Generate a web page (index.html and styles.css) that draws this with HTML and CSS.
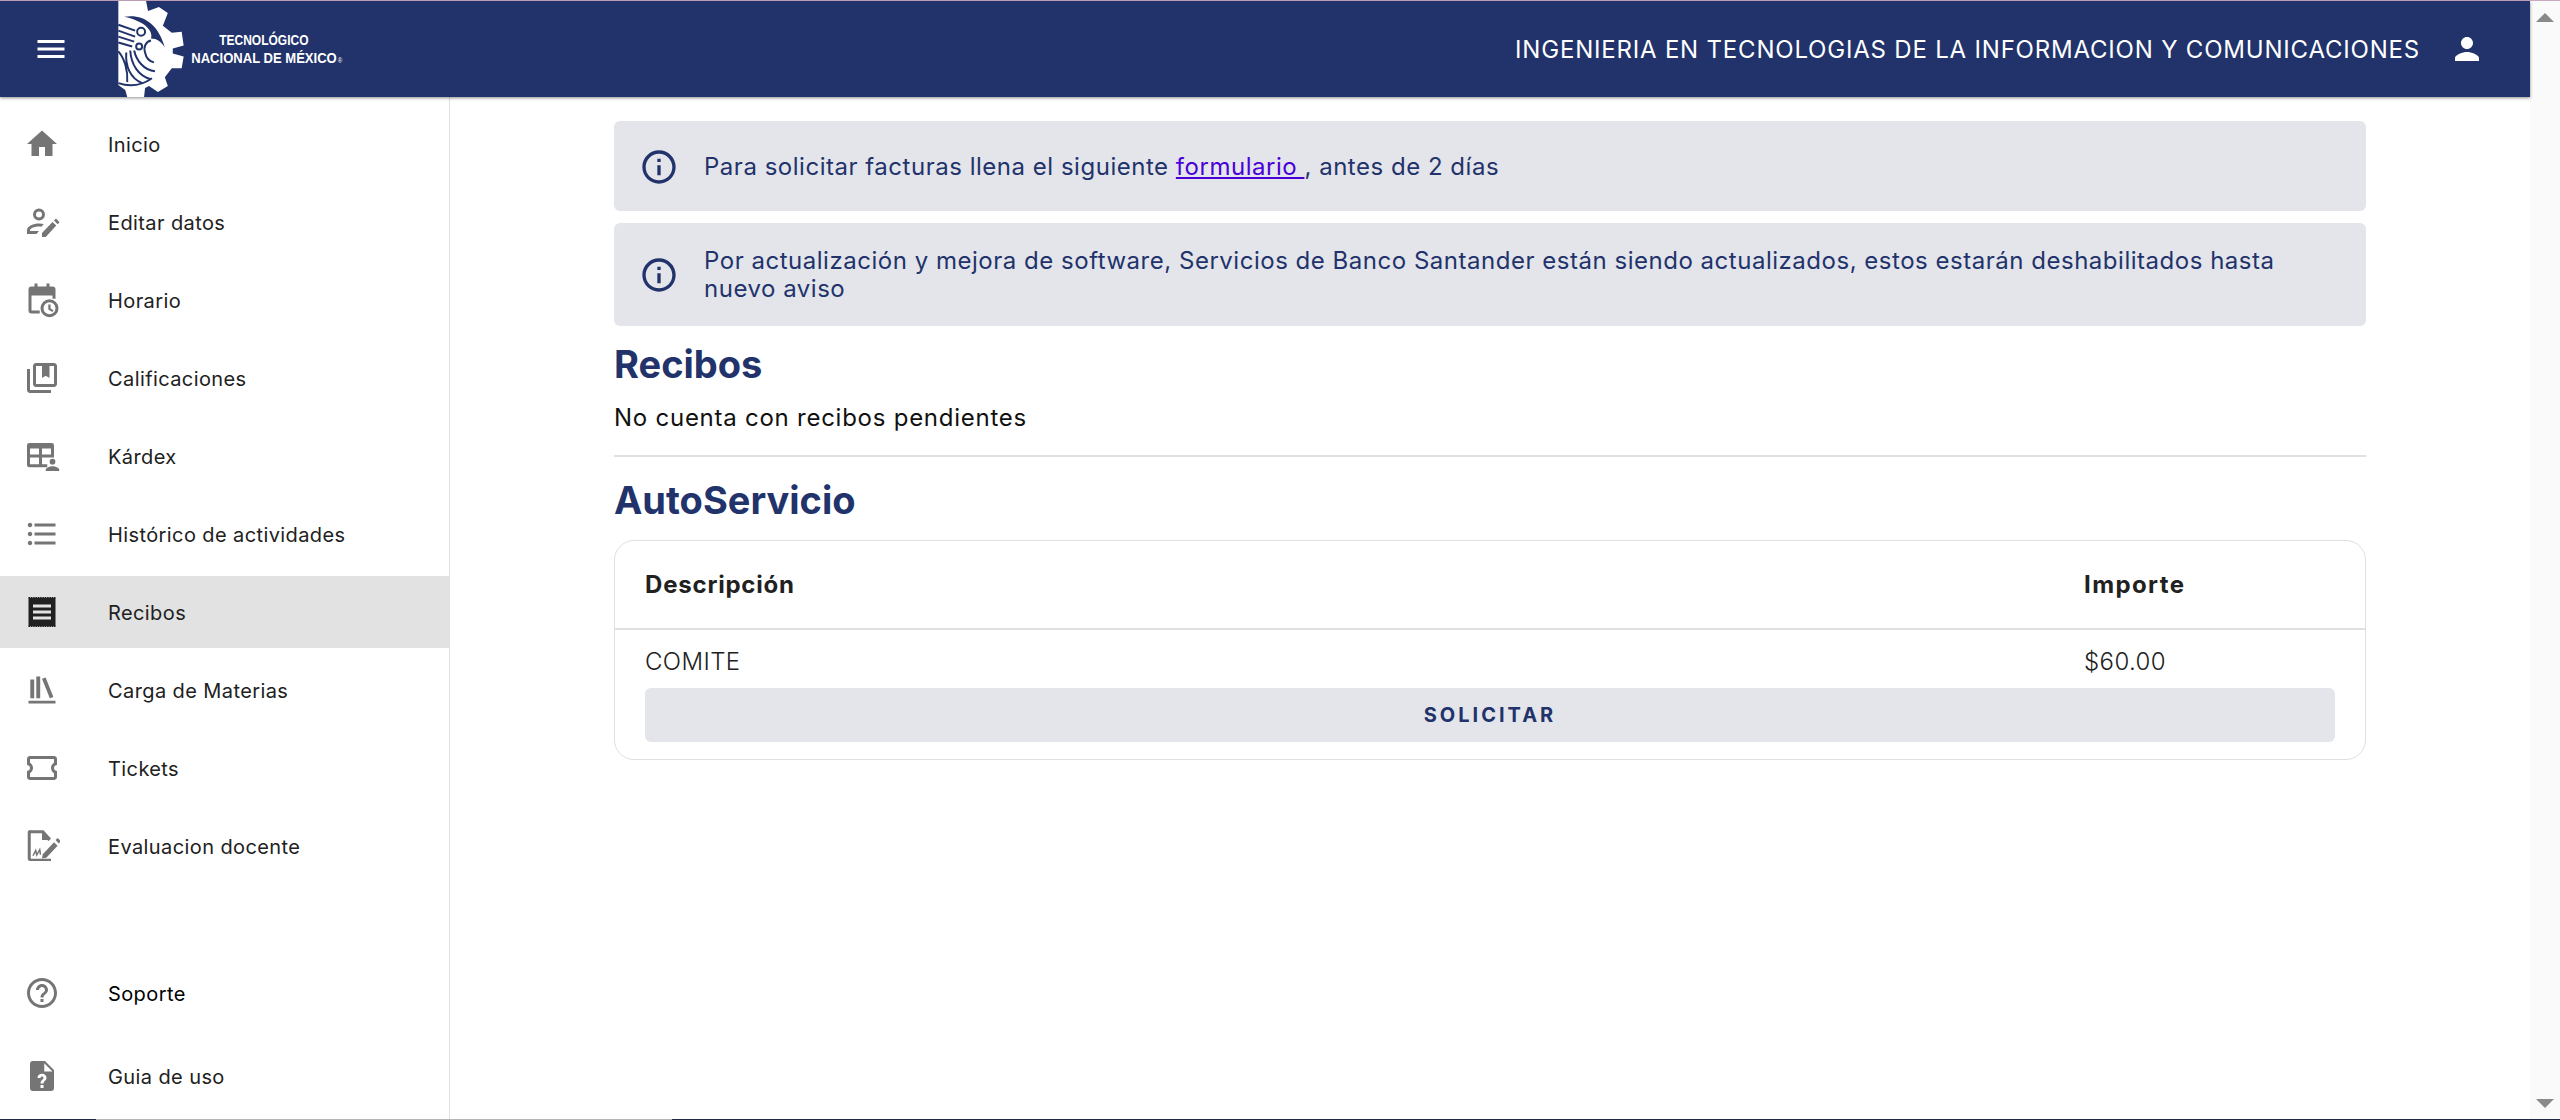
FILE: index.html
```html
<!DOCTYPE html>
<html lang="es">
<head>
  <meta charset="UTF-8" />
  <meta name="viewport" content="width=device-width, initial-scale=1.0"/>
  <title>Recibos | Tecnológico Nacional de México</title>
  <link rel="stylesheet" href="styles.css">
</head>
<body>

  <div class="top-line"></div>

  <div class="window">
    <div class="page">

      <header class="topbar">
        <div class="topbar-left">
          <button class="menu-btn" aria-label="Menu">
            <svg class="icon" viewBox="0 0 24 24"><path d="M3 18h18v-2H3v2zm0-5h18v-2H3v2zm0-7v2h18V6H3z"/></svg>
          </button>
          <div class="logo">
            <svg class="logo-gear" viewBox="117 0 68 97">
              <path class="gear" d="M118 0H146L148 10 159 6 168 12 163 25 172 32 182 31 184 45 173 48V53L184 56 182 68 172 68 165 77 168 86 158 92 149 86 145 88 144 97H127L125 90 118 85Z"/>
              <path class="eagle-fill" d="M124 16C142 13 158 22 165 47 161 41 157 38 151 38 153 32 148 26 141 22 135 19 130 17 124 16Z"/>
              <g class="eagle">
                <path d="M118 24 135 30M118 30 135 36M118 36 134 41M118 42 132 46"/>
                <path d="M151 40C146 41 143 46 145 52 146 57 149 61 154 62"/>
                <path d="M134 50C136 60 144 70 155 71M130 50C131 64 138 76 151 79M126 52C125 66 130 78 142 83M118 51C124 58 128 70 127 82"/>
                <path d="M118 83C130 87 142 85 152 78"/>
              </g>
              <circle class="eagle" cx="141" cy="31" r="4"/>
              <circle class="eagle" cx="139" cy="46" r="3"/>
            </svg>
            <div class="logo-text">
              <span class="logo-line-one">TECNOLÓGICO</span>
              <span class="logo-line-two">NACIONAL DE MÉXICO<small>®</small></span>
            </div>
          </div>
        </div>
        <div class="topbar-right">
          <span class="career">INGENIERIA EN TECNOLOGIAS DE LA INFORMACION Y COMUNICACIONES</span>
          <svg class="icon" viewBox="0 0 24 24"><path d="M12 12c2.21 0 4-1.79 4-4s-1.79-4-4-4-4 1.79-4 4 1.79 4 4 4zm0 2c-2.67 0-8 1.79-8 4v2h16v-2c0-2.21-5.33-4-8-4z"/></svg>
        </div>
      </header>

      <div class="body-row">
        <nav class="sidebar">
          <a class="nav-item">
            <svg class="icon" viewBox="0 0 24 24"><path d="M10 20v-6h4v6h5v-8h3L12 3 2 12h3v8z"/></svg>
            <span>Inicio</span>
          </a>
          <a class="nav-item">
            <svg class="icon" viewBox="0 0 24 24"><path fill-rule="evenodd" d="M10 3a4 4 0 1 1 0 8 4 4 0 0 1 0-8zm0 2a2 2 0 1 0 0 4 2 2 0 0 0 0-4zM2 20v-2.500C2 14.500 6.500 13 10 13c1.200 0 2.200.1 3.200.4l-1.600 1.800c-.5-.1-1-.2-1.600-.2-2.800 0-6 1.100-6 2.500v.5h6l-1.700 2H2z"/><path d="M12 22v-2.600l7-7.400 2.500 2.400-7 7.600zM20 11l1.300-1.300 2.400 2.400L22.400 13.500z"/></svg>
            <span>Editar datos</span>
          </a>
          <a class="nav-item">
            <svg class="icon" viewBox="0 0 24 24"><path fill-rule="evenodd" d="M7 1h2v2h6V1h2v2h2a2 2 0 0 1 2 2v6.200h-2V9H5v10h5.500v2H5a2 2 0 0 1-2-2V5a2 2 0 0 1 2-2h2z"/><path fill-rule="evenodd" d="M17 11.500a6 6 0 1 1 0 12 6 6 0 0 1 0-12zm0 2a4 4 0 1 0 0 8 4 4 0 0 0 0-8z"/><path d="M16.200 15h1.500v2.600l2 1.200-.8 1.200-2.700-1.700z"/></svg>
            <span>Horario</span>
          </a>
          <a class="nav-item">
            <svg class="icon" viewBox="0 0 24 24"><path d="M4 6H2v14c0 1.100.9 2 2 2h14v-2H4V6zm16-4H8c-1.100 0-2 .9-2 2v12c0 1.100.9 2 2 2h12c1.100 0 2-.9 2-2V4c0-1.100-.9-2-2-2zm0 14H8V4h4v8l2.500-1.500L17 12V4h3v12z"/></svg>
            <span>Calificaciones</span>
          </a>
          <a class="nav-item">
            <svg class="icon" viewBox="0 0 24 24"><path fill-rule="evenodd" d="M3.500 3.300h15A1.500 1.500 0 0 1 20 4.800V13h-8v4.500h3.500v2h-12A1.500 1.500 0 0 1 2 18V4.800a1.500 1.500 0 0 1 1.500-1.500zM4 7v4h6V7zm8 0v4h6V7zM4 13v4.500h6V13z"/><circle cx="19" cy="15.800" r="1.900"/><path d="M14.500 22v-.8c0-1.600 3-2.400 4.500-2.400s4.500.8 4.500 2.400v.8z"/></svg>
            <span>Kárdex</span>
          </a>
          <a class="nav-item">
            <svg class="icon" viewBox="0 0 24 24"><path d="M4 10.500c-.83 0-1.500.67-1.500 1.500s.67 1.500 1.500 1.500 1.500-.67 1.500-1.500-.67-1.500-1.500-1.500zm0-6c-.83 0-1.500.67-1.500 1.500S3.170 7.500 4 7.500 5.500 6.830 5.500 6 4.830 4.500 4 4.500zm0 12c-.83 0-1.500.68-1.500 1.500s.68 1.500 1.500 1.500 1.500-.68 1.500-1.500-.67-1.500-1.500-1.500zM7 19h14v-2H7v2zm0-6h14v-2H7v2zm0-8v2h14V5H7z"/></svg>
            <span>Histórico de actividades</span>
          </a>
          <a class="nav-item active">
            <svg class="icon" viewBox="0 0 24 24">
              <path fill-rule="evenodd" d="M3 2.500h18v19H3zM6 7v2h12V7zm0 4v2h12v-2zm0 4v2h12v-2z"/>
              <path class="teeth" d="M3 2.400H21M3 21.600H21"/>
            </svg>
            <span>Recibos</span>
          </a>
          <a class="nav-item">
            <svg class="icon" viewBox="0 0 24 24"><path d="M3 21h18v-1.800H3zM4.200 5h2.600v12.500H4.200zM8.200 3h2.600v14.500H8.200zM12 4.500l2.400-.8 5.200 13-2.400.8z"/></svg>
            <span>Carga de Materias</span>
          </a>
          <a class="nav-item">
            <svg class="icon" viewBox="0 0 24 24"><path d="M22 10V6c0-1.110-.9-2-2-2H4c-1.100 0-1.990.89-1.990 2v4c1.100 0 1.990.9 1.990 2s-.89 2-2 2v4c0 1.100.9 2 2 2h16c1.100 0 2-.9 2-2v-4c-1.100 0-2-.9-2-2s.9-2 2-2zm-2-1.460c-1.190.69-2 1.990-2 3.460s.81 2.770 2 3.460V18H4v-2.540c1.190-.69 2-1.990 2-3.460 0-1.480-.8-2.770-1.990-3.460L4 6h16v2.540z"/></svg>
            <span>Tickets</span>
          </a>
          <a class="nav-item">
            <svg class="icon" viewBox="0 0 24 24"><path d="M4.500 1.500H13l5 5.500-1.500 1.600-1-.6H12V3.500H4.500v17H18V22H4a1.500 1.500 0 0 1-1.500-1.500V3A1.500 1.500 0 0 1 4.500 1.500z"/><path d="M12.500 17.500l7.500-8 2.400 2.300-7.500 8-2.900.6zM21 8l1.500-1.300 2 2-1.300 1.600z"/><path class="squiggle" d="M6 18.500l1.800-3.500 .7 3 2-3.500 .5 3.200"/></svg>
            <span>Evaluacion docente</span>
          </a>

          <div class="sidebar-bottom">
            <a class="nav-item support">
              <svg class="icon" viewBox="0 0 24 24"><path d="M11 18h2v-2h-2v2zm1-16C6.480 2 2 6.480 2 12s4.480 10 10 10 10-4.480 10-10S17.520 2 12 2zm0 18c-4.410 0-8-3.590-8-8s3.590-8 8-8 8 3.590 8 8-3.590 8-8 8zm0-14c-2.210 0-4 1.790-4 4h2c0-1.100.9-2 2-2s2 .9 2 2c0 2-3 1.750-3 5h2c0-2.250 3-2.500 3-5 0-2.210-1.790-4-4-4z"/></svg>
              <span>Soporte</span>
            </a>
            <a class="nav-item">
              <svg class="icon" viewBox="0 0 24 24"><path fill-rule="evenodd" d="M6 2h8l6 6v12a2 2 0 0 1-2 2H6a2 2 0 0 1-2-2V4a2 2 0 0 1 2-2zm7.500 1.500V9H19zM11 18v2h2v-2zm1-7.500c-1.800 0-3 1.200-3 2.800h2c0-.6.400-1 1-1s1 .4 1 1c0 1.200-2 1.300-2 3.700h2c0-1.700 2-2 2-3.700 0-1.600-1.200-2.800-3-2.800z"/></svg>
              <span>Guia de uso</span>
            </a>
          </div>
        </nav>

        <main class="content">
          <div class="content-inner">
            <div class="alert">
              <svg class="alert-icon" viewBox="0 0 24 24"><path d="M11 7h2v2h-2zm0 4h2v6h-2zm1-9C6.480 2 2 6.480 2 12s4.480 10 10 10 10-4.480 10-10S17.520 2 12 2zm0 18c-4.410 0-8-3.590-8-8s3.590-8 8-8 8 3.590 8 8-3.590 8-8 8z"/></svg>
              <p>Para solicitar facturas llena el siguiente <a href="#">formulario </a>, antes de 2 días</p>
            </div>
            <div class="alert">
              <svg class="alert-icon" viewBox="0 0 24 24"><path d="M11 7h2v2h-2zm0 4h2v6h-2zm1-9C6.480 2 2 6.480 2 12s4.480 10 10 10 10-4.480 10-10S17.520 2 12 2zm0 18c-4.410 0-8-3.590-8-8s3.590-8 8-8 8 3.590 8 8-3.590 8-8 8z"/></svg>
              <p>Por actualización y mejora de software, Servicios de Banco Santander están siendo actualizados, estos estarán deshabilitados hasta nuevo aviso</p>
            </div>

            <h2 class="title-recibos">Recibos</h2>
            <p class="empty">No cuenta con recibos pendientes</p>
            <hr>
            <h2 class="title-auto">AutoServicio</h2>

            <div class="table-card">
              <div class="table-row table-head">
                <span>Descripción</span>
                <span class="wide">Importe</span>
              </div>
              <div class="table-row table-cell">
                <span>COMITE</span>
                <span>$60.00</span>
              </div>
              <button class="request-btn">SOLICITAR</button>
            </div>
          </div>
        </main>
      </div>
    </div>

    <div class="scrollbar">
      <span class="arrow-up"></span>
      <span class="arrow-down"></span>
    </div>
  </div>

  <div class="bottom-line">
    <span class="dark first"></span>
    <span class="grey"></span>
    <span class="dark"></span>
  </div>

</body>
</html>
```
FILE: styles.css
```css
:root {
  --navy: #21336a;
  --border: #e0e0e0;
  --alert: #e4e5ea;
  --icon: #757575;
  --text: #212121;
}

* { box-sizing: border-box; }

html, body {
  height: 100%;
}

body {
  margin: 0;
  display: flex;
  flex-direction: column;
  overflow: hidden;
  background: #fff;
  color: var(--text);
  font-family: Inter, 'Noto Sans', sans-serif;
}

.top-line {
  height: 1px;
  background: #c9a9c4;
}

.window {
  flex: 1;
  display: flex;
  min-height: 0;
}

.page {
  flex: 1;
  display: flex;
  flex-direction: column;
  min-width: 0;
}

.scrollbar {
  width: 30px;
  background: #fafafa;
  display: flex;
  flex-direction: column;
  align-items: center;
  justify-content: space-between;
  padding: 12px 0 11px;
}

.arrow-up, .arrow-down {
  width: 0;
  height: 0;
  border-left: 9px solid transparent;
  border-right: 9px solid transparent;
}

.arrow-up { border-bottom: 9px solid #8a8a8a; }
.arrow-down { border-top: 9px solid #8a8a8a; }

.bottom-line {
  height: 1px;
  display: flex;
}

.bottom-line .dark { flex: 1; background: #1f2b46; }
.bottom-line .first { flex: 0 0 96px; }
.bottom-line .grey { flex: 0 0 576px; background: #b4b4b4; }

/* top bar */
.topbar {
  height: 96px;
  flex-shrink: 0;
  background: var(--navy);
  color: #fff;
  display: flex;
  justify-content: space-between;
  align-items: center;
  box-shadow: 0 1px 3px rgba(0,0,0,0.45);
  position: relative;
  z-index: 2;
}

.topbar-left {
  display: flex;
  align-items: center;
  height: 100%;
}

.menu-btn {
  width: 36px;
  height: 36px;
  margin-left: 33px;
  padding: 0;
  background: none;
  border: none;
  color: #fff;
  fill: #fff;
}

.logo {
  display: flex;
  align-items: center;
  height: 100%;
  margin-left: 48px;
}

.logo-gear {
  width: 68px;
  height: 96px;
  display: block;
}

.gear { fill: #fff; }
.eagle-fill { fill: var(--navy); }

.eagle {
  fill: none;
  stroke: var(--navy);
  stroke-width: 2;
}

.logo-text {
  display: flex;
  flex-direction: column;
  align-items: center;
  width: 150px;
  margin: 2px 0 0 7px;
  font-family: 'Liberation Sans', sans-serif;
  font-weight: bold;
  font-size: 15px;
  line-height: 18px;
  white-space: nowrap;
}

.logo-line-one { transform: translateX(-3px) scaleX(0.8); }
.logo-line-two { transform: scaleX(0.87); }

.logo-text small {
  font-size: 7px;
  font-weight: normal;
  margin-left: 1px;
}

.topbar-right {
  display: flex;
  align-items: center;
  gap: 29px;
  padding-right: 45px;
  fill: #fff;
}

.career {
  font-size: 24px;
  letter-spacing: 0.8px;
}

.icon {
  width: 36px;
  height: 36px;
  display: block;
  flex-shrink: 0;
}

/* sidebar */
.body-row {
  flex: 1;
  display: flex;
  min-height: 0;
}

.sidebar {
  width: 450px;
  flex-shrink: 0;
  border-right: 1px solid var(--border);
  display: flex;
  flex-direction: column;
  padding: 11px 0 7px;
}

.nav-item {
  height: 72px;
  flex-shrink: 0;
  display: flex;
  align-items: center;
  gap: 48px;
  padding-left: 24px;
  margin-bottom: 6px;
  font-size: 20px;
  letter-spacing: 0.4px;
  color: var(--text);
  fill: var(--icon);
}

.nav-item span { padding-top: 2px; }

.nav-item.active {
  background: #e2e2e2;
  fill: #212121;
}

.nav-item.support { color: #000; margin-bottom: 11px; }

.sidebar-bottom { margin-top: auto; }
.sidebar-bottom .nav-item:last-child { margin-bottom: 0; }

.teeth {
  fill: none;
  stroke: #212121;
  stroke-width: 0.8;
  stroke-dasharray: 1 0.55;
}

.squiggle {
  fill: none;
  stroke: #757575;
  stroke-width: 1;
}

/* content */
.content {
  flex: 1;
  min-width: 0;
  display: flex;
  justify-content: center;
}

.content-inner {
  width: 1752px;
  padding-top: 24px;
}

.alert {
  display: flex;
  align-items: center;
  min-height: 90px;
  margin-bottom: 12px;
  padding: 24px 25px 23px;
  border-radius: 6px;
  background: var(--alert);
  color: var(--navy);
  fill: var(--navy);
  font-size: 24px;
  line-height: 28px;
  letter-spacing: 0.52px;
}

.alert p { margin: 0; }
.alert a { color: #4a00d8; }

.alert-icon {
  width: 40px;
  height: 40px;
  flex-shrink: 0;
  margin-right: 25px;
}

h2 {
  margin: 0;
  color: var(--navy);
  font-size: 38px;
  line-height: 44px;
  font-weight: 700;
}

.title-recibos { margin-top: 16px; }
.title-auto { margin-top: 21px; }

.empty {
  margin: 15px 0 0;
  font-size: 24px;
  line-height: 34px;
  letter-spacing: 0.75px;
  color: #111;
}

hr {
  margin: 20px 0 0;
  border: none;
  border-top: 2px solid var(--border);
}

.table-card {
  margin-top: 18px;
  height: 220px;
  border: 1px solid var(--border);
  border-radius: 20px;
  display: flex;
  flex-direction: column;
}

.table-row {
  display: grid;
  grid-template-columns: 1439px 1fr;
  padding: 0 30px;
}

.table-head {
  height: 89px;
  align-items: center;
  border-bottom: 2px solid var(--border);
  font-weight: 700;
  font-size: 24px;
  letter-spacing: 0.8px;
}

.table-head .wide { letter-spacing: 1.4px; }

.table-cell {
  height: 58px;
  padding-top: 4px;
  align-items: center;
  font-size: 24px;
  font-weight: 300;
  letter-spacing: 0.4px;
}

.request-btn {
  margin: 0 30px;
  height: 54px;
  background: var(--alert);
  border: none;
  border-radius: 6px;
  color: var(--navy);
  font-family: inherit;
  font-weight: 700;
  font-size: 20px;
  letter-spacing: 3px;
}
```
